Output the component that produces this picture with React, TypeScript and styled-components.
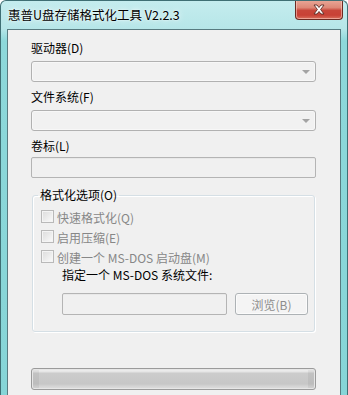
import React from "react";
import styled, { createGlobalStyle } from "styled-components";

const Global = createGlobalStyle`
  html, body { margin: 0; padding: 0; background: #ffffff; }
  body { font-family: "Noto Sans CJK SC", "Noto Sans", sans-serif; }
`;

const FONT = `"Noto Sans CJK SC", "Noto Sans", "DejaVu Sans", sans-serif`;

const Window = styled.div`
  box-sizing: border-box;
  width: 348px;
  height: 395px;
  overflow: hidden;
  display: flex;
  flex-direction: column;
  border: 1px solid #3f6f74;
  border-bottom: none;
  border-radius: 6px 6px 0 0;
  background: linear-gradient(to bottom, #c4ecee 0px, #b6e6e8 28px, #8dd8da 40px, #86d5d7 100%);
  font-family: ${FONT};
`;

const TitleBar = styled.div`
  height: 28px;
  display: flex;
  align-items: flex-start;
  justify-content: space-between;
  padding-left: 7px;
  padding-right: 4px;
`;

const Title = styled.div`
  margin-top: 6px;
  font-size: 12.5px;
  line-height: 16px;
  color: #000;
  text-shadow: 0 0 6px rgba(255, 255, 255, 0.95), 0 0 2px rgba(255, 255, 255, 0.9);
  white-space: nowrap;
`;

const CloseButton = styled.div`
  box-sizing: border-box;
  margin-top: -1px;
  width: 48px;
  height: 20px;
  border: 1px solid #6c2a22;
  border-top: none;
  border-radius: 0 0 4px 4px;
  background: linear-gradient(to bottom, #e9a898 0%, #dd8877 40%, #c8463a 55%, #c84136 80%, #d9705e 100%);
  box-shadow: inset 0 0 0 1px rgba(255, 210, 200, 0.55);
  display: flex;
  align-items: center;
  justify-content: center;
`;

const Client = styled.div`
  flex: 1;
  margin: 0 6px;
  border: 1px solid #587b80;
  border-bottom: none;
  background: #f0f0f0;
  display: flex;
  flex-direction: column;
  padding: 10px 24px 0 23px;
`;

const FieldLabel = styled.div<{ $mt?: number }>`
  margin-top: ${(p) => p.$mt ?? 0}px;
  font-size: 12px;
  line-height: 16px;
  color: #000;
  white-space: nowrap;
`;

const Combo = styled.div<{ $mt?: number }>`
  box-sizing: border-box;
  margin-top: ${(p) => p.$mt ?? 0}px;
  height: 21px;
  border: 1px solid #b1b1b1;
  border-radius: 3px;
  background: #f1f1f1;
  box-shadow: inset 0 0 0 1px #f7f7f7;
  display: flex;
  align-items: center;
  justify-content: flex-end;
  padding-right: 5px;
`;

const Arrow = styled.span`
  width: 0;
  height: 0;
  border-left: 4px solid transparent;
  border-right: 4px solid transparent;
  border-top: 4px solid #a3a3a3;
  margin-top: 1px;
`;

const TextBox = styled.div<{ $mt?: number; $w?: number; $h?: number }>`
  box-sizing: border-box;
  margin-top: ${(p) => p.$mt ?? 0}px;
  height: ${(p) => p.$h ?? 21}px;
  ${(p) => (p.$w ? `width: ${p.$w}px;` : "")}
  border: 1px solid #b4b4b4;
  border-radius: 2px;
  background: #f0f0f0;
  box-shadow: inset 0 1px 0 #e8e8e8;
`;

const Group = styled.fieldset`
  box-sizing: border-box;
  margin: 9px 1px 0 1px;
  padding: 0 0 16px 0;
  border: 1px solid #d5dfe5;
  border-radius: 3px;
  box-shadow: inset 1px 1px 0 #ffffff, 1px 1px 0 #ffffff;
  min-width: 0;
`;

const Legend = styled.legend`
  margin-left: 5px;
  padding: 0 2px;
  font-size: 12px;
  line-height: 16px;
  color: #000;
`;

const Options = styled.div`
  display: flex;
  flex-direction: column;
  gap: 3px;
  padding: 7px 0 0 8px;
`;

const CheckRow = styled.div`
  display: flex;
  align-items: flex-start;
  height: 17px;
  gap: 3px;
`;

const CheckBox = styled.span`
  box-sizing: border-box;
  width: 13px;
  height: 13px;
  margin-top: 0px;
  border: 1px solid #b9b9b9;
  background: linear-gradient(135deg, #dcdcdc 0%, #e9e9e9 45%, #fbfbfb 100%);
  box-shadow: inset 0 0 0 1px #f4f4f4;
`;

const CheckText = styled.span`
  font-size: 12px;
  line-height: 15px;
  color: #878787;
  white-space: nowrap;
`;

const SubLabel = styled.div`
  padding-left: 29px;
  font-size: 12px;
  line-height: 16px;
  color: #000;
  white-space: nowrap;
`;

const FileRow = styled.div`
  display: flex;
  gap: 8px;
  margin-top: 10px;
  padding-left: 29px;
`;

const BrowseButton = styled.div`
  box-sizing: border-box;
  width: 73px;
  height: 22px;
  border: 1px solid #adb2b5;
  border-radius: 3px;
  background: #f4f4f4;
  box-shadow: inset 0 0 0 1px #fbfbfb;
  color: #8d8d8d;
  font-size: 12px;
  display: flex;
  align-items: center;
  justify-content: center;
`;

const Progress = styled.div`
  box-sizing: border-box;
  margin-top: 36px;
  height: 22px;
  border: 1px solid #9b9b9b;
  border-radius: 3px;
  background:
    linear-gradient(to right, rgba(0, 0, 0, 0.05) 0 7px, transparent 7px calc(100% - 7px), rgba(0, 0, 0, 0.05) calc(100% - 7px)),
    linear-gradient(to bottom, #f2f2f2 0px, #e4e4e4 3px, #cccccc 4px, #c7c7c7 15px, #d3d3d3 17px, #dedede 20px);
  box-shadow: inset 0 0 0 1px #e6e6e6;
`;

const CloseIcon = () => (
  <svg width="14" height="11" viewBox="0 0 14 11">
    <path
      d="M2 1 L5 1 L7 3.5 L9 1 L12 1 L8.6 5.5 L12 10 L9 10 L7 7.5 L5 10 L2 10 L5.4 5.5 Z"
      fill="#ffffff"
      stroke="#5a2a24"
      strokeWidth="0.9"
      strokeLinejoin="round"
    />
  </svg>
);

export default function App() {
  return (
    <>
      <Global />
      <Window>
        <TitleBar>
          <Title>惠普U盘存储格式化工具 V2.2.3</Title>
          <CloseButton>
            <CloseIcon />
          </CloseButton>
        </TitleBar>
        <Client>
          <FieldLabel>驱动器(D)</FieldLabel>
          <Combo $mt={5}>
            <Arrow />
          </Combo>
          <FieldLabel $mt={7}>文件系统(F)</FieldLabel>
          <Combo $mt={5}>
            <Arrow />
          </Combo>
          <FieldLabel $mt={7}>卷标(L)</FieldLabel>
          <TextBox $mt={3} />
          <Group>
            <Legend>格式化选项(O)</Legend>
            <Options>
              <CheckRow>
                <CheckBox />
                <CheckText>快速格式化(Q)</CheckText>
              </CheckRow>
              <CheckRow>
                <CheckBox />
                <CheckText>启用压缩(E)</CheckText>
              </CheckRow>
              <CheckRow>
                <CheckBox />
                <CheckText>创建一个 MS-DOS 启动盘(M)</CheckText>
              </CheckRow>
            </Options>
            <SubLabel>指定一个 MS-DOS 系统文件:</SubLabel>
            <FileRow>
              <TextBox $w={165} $h={22} />
              <BrowseButton>浏览(B)</BrowseButton>
            </FileRow>
          </Group>
          <Progress />
        </Client>
      </Window>
    </>
  );
}
